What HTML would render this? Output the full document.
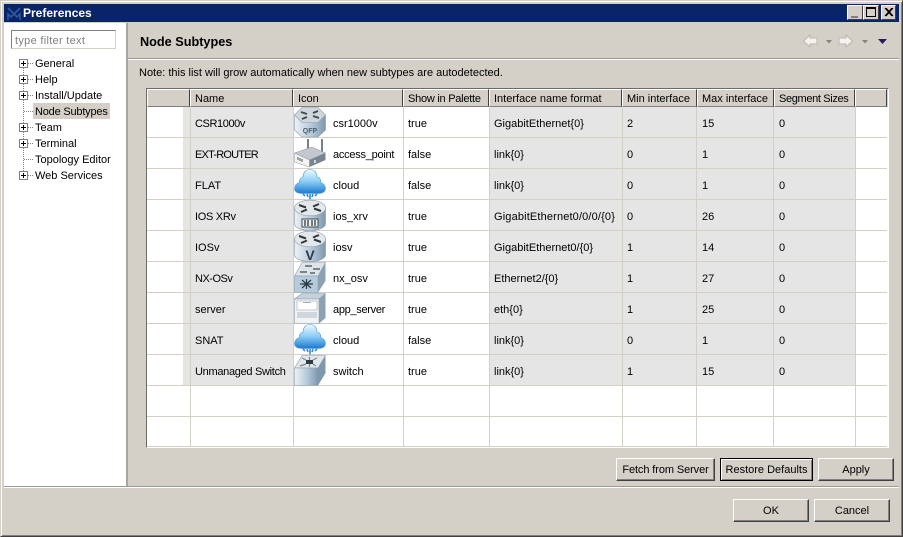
<!DOCTYPE html>
<html><head><meta charset="utf-8"><style>
html,body{margin:0;padding:0;background:#d4d0c8}
body{width:903px;height:537px;position:relative;overflow:hidden;font:11px "Liberation Sans",sans-serif;color:#000}
div,span,svg{position:absolute;box-sizing:border-box}
.t{white-space:nowrap;line-height:14px}
.btn{background:#d4d0c8;border:1px solid;border-color:#fff #404040 #404040 #fff;box-shadow:inset -1px -1px 0 #808080;text-align:center;line-height:21px;white-space:nowrap}
.pl{width:9px;height:9px;left:19px;border:1px solid #808080;background:#fff}
.pl:before{content:"";position:absolute;left:1px;top:3px;width:5px;height:1px;background:#000}
.pl:after{content:"";position:absolute;left:3px;top:1px;width:1px;height:5px;background:#000}
.dh{left:28px;width:5px;height:1px;background:repeating-linear-gradient(90deg,#808080 0 1px,transparent 1px 2px)}
.tr{left:35px;margin-top:1px}
.h{top:89px;height:18px;background:#d4d0c8;border:1px solid;border-color:#fff #404040 #808080 #fff;line-height:18px;padding-left:4px;white-space:nowrap}
.lv{top:107px;width:1px;height:339px;background:#d4d0c8}
.lh{left:147px;width:740px;height:1px;background:#d4d0c8}
.c{white-space:nowrap;line-height:14px;margin-top:1px}
.wb{top:5px;height:15px;width:16px;background:#d4d0c8;border:1px solid;border-color:#fff #404040 #404040 #fff}
</style></head><body>
<svg width="0" height="0" style="left:0;top:0"><defs>
<linearGradient id="s" x1="0" x2="1" y1="0" y2="0"><stop offset="0" stop-color="#eef2f6"/><stop offset=".55" stop-color="#b4c8da"/><stop offset="1" stop-color="#7f98ad"/></linearGradient>
<linearGradient id="cl" x1="0" x2="0" y1="0" y2="1"><stop offset="0" stop-color="#f2faff"/><stop offset=".5" stop-color="#8accf5"/><stop offset="1" stop-color="#1c78d0"/></linearGradient>
<symbol id="cloud" viewBox="0 0 32 31"><path d="M16 .5c4.500 0 7 3.500 7 7.500 3 .5 4 3 3.800 5.500 2.700 1 4.700 3.500 4.700 6 0 3.500-3.500 5-7.500 5H8c-4 0-7.500-1.500-7.500-5 0-2.500 2-5 4.700-6C5 11 6.500 8.500 9 8c0-4 2.500-7.500 7-7.500z" fill="url(#cl)" stroke="#4a9ade" stroke-width=".6"/><path d="M9 25l2 2M13 25l1 3M16 25v5.500M19 25l-1 3M23 25l-2 2" stroke="#2f8ee0" stroke-width="1.600"/></symbol>
<symbol id="router" viewBox="0 0 32 31"><path d="M.5 8v16c0 3.500 7 6.500 15.500 6.500S31.500 27.500 31.500 24V8z" fill="url(#s)" stroke="#8a9aa8" stroke-width=".6"/><ellipse cx="16" cy="8" rx="15.500" ry="7.800" fill="#e4e8eb" stroke="#8a9aa8" stroke-width=".6"/><path d="M5 5l7 2.500M27 11l-7-2.500M19 6.500l6-2.500M13 9.500l-6 2.500" stroke="#2d383e" stroke-width="2"/></symbol>
</defs></svg>

<!-- window frame -->
<div style="left:0;top:0;width:903px;height:537px;border:1px solid;border-color:#d4d0c8 #404040 #404040 #d4d0c8;box-shadow:inset 1px 1px 0 #fff,inset -1px -1px 0 #808080"></div>
<div style="left:4px;top:4px;width:895px;height:18px;background:#0a246a"></div>
<svg style="left:7px;top:7px" width="14" height="14" viewBox="0 0 14 14"><path d="M1 1l6 6 6-6M1 13V7l3 3 3-3 3 3 3-3v6" fill="none" stroke="#2f5aa0" stroke-width="1.600"/></svg>
<div class="t" style="left:23px;top:6px;color:#fff;font-weight:bold;font-size:12px">Preferences</div>
<div class="wb" style="left:847px"><div style="left:3px;top:10px;width:7px;height:2px;background:#808080"></div></div>
<div class="wb" style="left:863px"><div style="left:2px;top:1px;width:10px;height:10px;border:1px solid #000;border-top-width:2px"></div></div>
<div class="wb" style="left:881px;width:15px"><svg style="left:2px;top:2px" width="10" height="9" viewBox="0 0 10 9"><path d="M1 0l7 8M2 0l7 8M8 0L1 8M9 0L2 8" stroke="#000" stroke-width="1"/></svg></div>

<!-- left panel -->
<div style="left:4px;top:23px;width:122px;height:463px;background:#fff"></div>
<div style="left:126px;top:23px;width:2px;height:463px;background:#a8a59e"></div>
<div style="left:11px;top:30px;width:105px;height:19px;background:#fff;border:1px solid;border-color:#808080 #d4d0c8 #d4d0c8 #808080"></div>
<div class="t" style="left:15px;top:33px;margin-top:1px;color:#808080;letter-spacing:.3px">type filter text</div>
<div style="left:23px;top:68px;width:1px;height:107px;background:repeating-linear-gradient(0deg,#808080 0 1px,transparent 1px 2px)"></div>
<div class="pl" style="top:59px"></div><div class="dh" style="top:63px"></div><div class="t tr" style="top:56px">General</div>
<div class="pl" style="top:75px"></div><div class="dh" style="top:79px"></div><div class="t tr" style="top:72px">Help</div>
<div class="pl" style="top:91px"></div><div class="dh" style="top:95px"></div><div class="t tr" style="top:88px">Install/Update</div>
<div class="dh" style="top:111px;left:24px;width:9px"></div>
<div style="left:33px;top:103px;width:77px;height:16px;background:#d4d0c8"></div><div class="t tr" style="top:104px;letter-spacing:-.2px">Node Subtypes</div>
<div class="pl" style="top:123px"></div><div class="dh" style="top:127px"></div><div class="t tr" style="top:120px">Team</div>
<div class="pl" style="top:139px"></div><div class="dh" style="top:143px"></div><div class="t tr" style="top:136px">Terminal</div>
<div class="dh" style="top:159px;left:24px;width:9px"></div><div class="t tr" style="top:152px">Topology Editor</div>
<div class="pl" style="top:171px"></div><div class="dh" style="top:175px"></div><div class="t tr" style="top:168px">Web Services</div>

<!-- header -->
<div class="t" style="left:140px;top:35px;font-weight:bold;font-size:12.7px">Node Subtypes</div>
<div style="left:128px;top:58px;width:771px;height:1px;background:#9c9a94"></div>
<div style="left:128px;top:59px;width:771px;height:1px;background:#fff"></div>
<svg style="left:800px;top:32px" width="92" height="18" viewBox="0 0 92 18">
<path d="M3.500 9L10 3v3h7v6h-7v3z" fill="#f4f3f0" stroke="#b9b7b0"/>
<path d="M26 8h6l-3 3.500z" fill="#85837e"/>
<path d="M52.500 9L46 3v3h-7v6h7v3z" fill="#f4f3f0" stroke="#b9b7b0"/>
<path d="M62 8h6l-3 3.500z" fill="#85837e"/>
<path d="M78 7h9l-4.500 5z" fill="#2a1a5e"/>
</svg>
<div class="t" style="left:139px;top:66px">Note: this list will grow automatically when new subtypes are autodetected.</div>

<!-- table -->
<div style="left:146px;top:88px;width:743px;height:360px;background:#fff;border:1px solid;border-color:#6c6a66 #fff #fff #6c6a66"></div>
<div style="left:147px;top:89px;width:741px;height:18px;background:#d4d0c8"></div>
<div class="h" style="left:147px;width:43px"></div>
<div class="h" style="left:190px;width:103px">Name</div>
<div class="h" style="left:293px;width:110px">Icon</div>
<div class="h" style="left:403px;width:86px;letter-spacing:-.25px">Show in Palette</div>
<div class="h" style="left:489px;width:133px">Interface name format</div>
<div class="h" style="left:622px;width:75px">Min interface</div>
<div class="h" style="left:697px;width:77px">Max interface</div>
<div class="h" style="left:774px;width:81px;letter-spacing:-.35px">Segment Sizes</div>
<div class="h" style="left:855px;width:32px"></div>

<!-- grey cell bands -->
<div style="left:183px;top:107px;width:110px;height:278px;background:#e5e5e5"></div>
<div style="left:490px;top:107px;width:365px;height:278px;background:#e5e5e5"></div>
<!-- grid -->
<div class="lv" style="left:190px"></div><div class="lv" style="left:293px"></div><div class="lv" style="left:403px"></div><div class="lv" style="left:489px"></div><div class="lv" style="left:622px"></div><div class="lv" style="left:696px"></div><div class="lv" style="left:773px"></div><div class="lv" style="left:855px"></div>
<div class="lh" style="top:137px"></div><div class="lh" style="top:168px"></div><div class="lh" style="top:199px"></div><div class="lh" style="top:230px"></div><div class="lh" style="top:261px"></div><div class="lh" style="top:292px"></div><div class="lh" style="top:323px"></div><div class="lh" style="top:354px"></div><div class="lh" style="top:385px"></div><div class="lh" style="top:416px"></div><div class="lh" style="top:446px"></div>

<!-- icons -->
<svg style="left:294px;top:107px" width="32" height="31" viewBox="0 0 32 31"><path d="M.5 8v15l7.500 7h16l7.500-7V8z" fill="url(#s)" stroke="#8a9aa8" stroke-width=".6"/><path d="M.5 8L8 .5h16L31.500 8 24 15.500H8z" fill="#cfd6dc" stroke="#8a9aa8" stroke-width=".6"/><path d="M7 5l6 2M25 11l-6-2M19 6l5-2M13 10l-5 2" stroke="#3d4a50" stroke-width="1.800"/><text x="16" y="26" text-anchor="middle" font-family="Liberation Sans" font-size="7" font-weight="bold" fill="#4c6070">QFP</text></svg>
<svg style="left:294px;top:138px" width="32" height="31" viewBox="0 0 32 31"><path d="M14 1v11M28 1v15" stroke="#78818a" stroke-width="2"/><path d="M.5 15L18 9l13.500 6-16 7z" fill="#c2c8ce" stroke="#8a929a" stroke-width=".5"/><path d="M.5 15l15 7v7L.5 24z" fill="#f2f3f4" stroke="#8a929a" stroke-width=".5"/><path d="M15.500 22l16-7v7l-16 7z" fill="#78848f"/><path d="M4 19v3M6 20v3M8 21v3" stroke="#555" stroke-width="1"/><path d="M21 22v3" stroke="#eee" stroke-width="1.500"/></svg>
<svg style="left:294px;top:169px" width="32" height="31"><use href="#cloud" width="32" height="31"/></svg>
<svg style="left:294px;top:200px" width="32" height="31" viewBox="0 0 32 31"><use href="#router" width="32" height="31"/><rect x="8" y="19" width="16" height="8" fill="#eef1f3" stroke="#3d4a50"/><path d="M11 20v6M14 20v6M18 20v6M21 20v6" stroke="#3d4a50" stroke-width="1.400"/></svg>
<svg style="left:294px;top:231px" width="32" height="31" viewBox="0 0 32 31"><use href="#router" width="32" height="31"/><text x="16" y="29" text-anchor="middle" font-family="Liberation Sans" font-size="14" font-weight="bold" fill="#2c3a44">V</text></svg>
<svg style="left:294px;top:262px" width="32" height="31" viewBox="0 0 32 31"><path d="M.5 14L8 .5h23.500L24 14z" fill="#dfe4e8" stroke="#8a9aa8" stroke-width=".6"/><path d="M.5 14H24v16.500H.5z" fill="#b5cadb" stroke="#8a9aa8" stroke-width=".6"/><path d="M24 14l7.500-13.500V19L24 30.500z" fill="#8ba2b5"/><path d="M11 4h7M19 7h7M6 10h7M16 11h5" stroke="#58646c" stroke-width="1.500"/><path d="M6 22h13M12.500 17v10M8 18l9 8M17 18l-9 8" stroke="#2c3a44" stroke-width="1.200"/></svg>
<svg style="left:294px;top:293px" width="32" height="31" viewBox="0 0 32 31"><path d="M.5 6L8 .5h23.500L25 6z" fill="#c4d2de" stroke="#8a9aa8" stroke-width=".6"/><path d="M.5 6H25v24.500H.5z" fill="#f1f3f5" stroke="#8a9aa8" stroke-width=".6"/><path d="M25 6l6.500-5.500V25L25 30.500z" fill="#8ba2b5"/><rect x="3" y="8" width="20" height="9" fill="#fff" stroke="#c0c8d0"/><path d="M9 9.500h8" stroke="#aab"/><rect x="3" y="19" width="20" height="6" fill="#cfd6dc"/></svg>
<svg style="left:294px;top:324px" width="32" height="31"><use href="#cloud" width="32" height="31"/></svg>
<svg style="left:294px;top:355px" width="32" height="31" viewBox="0 0 32 31"><path d="M.5 13L8 .5h23.500L24 13z" fill="#e3e7ea" stroke="#8a9aa8" stroke-width=".6"/><path d="M.5 13H24v17.500H.5z" fill="url(#s)" stroke="#8a9aa8" stroke-width=".6"/><path d="M24 13L31.500.5V18L24 30.500z" fill="#7f98ad"/><rect x="12" y="5" width="7" height="4" fill="#2c3a44"/><path d="M8 3l4 2M23 3l-4 2M6 11l6-2M22 11l-3-2M15.500 2v3M15.500 9v3" stroke="#7a8790" stroke-width="1.200"/></svg>

<!-- rows -->
<div class="c" style="left:195px;top:116px;letter-spacing:-.4px">CSR1000v</div><div class="c" style="left:333px;top:116px">csr1000v</div><div class="c" style="left:408px;top:116px">true</div><div class="c" style="left:494px;top:116px">GigabitEthernet{0}</div><div class="c" style="left:627px;top:116px">2</div><div class="c" style="left:702px;top:116px">15</div><div class="c" style="left:779px;top:116px">0</div>
<div class="c" style="left:195px;top:147px;letter-spacing:-.8px">EXT-ROUTER</div><div class="c" style="left:333px;top:147px;letter-spacing:-.25px">access_point</div><div class="c" style="left:408px;top:147px">false</div><div class="c" style="left:494px;top:147px">link{0}</div><div class="c" style="left:627px;top:147px">0</div><div class="c" style="left:702px;top:147px">1</div><div class="c" style="left:779px;top:147px">0</div>
<div class="c" style="left:195px;top:178px">FLAT</div><div class="c" style="left:333px;top:178px">cloud</div><div class="c" style="left:408px;top:178px">false</div><div class="c" style="left:494px;top:178px">link{0}</div><div class="c" style="left:627px;top:178px">0</div><div class="c" style="left:702px;top:178px">1</div><div class="c" style="left:779px;top:178px">0</div>
<div class="c" style="left:195px;top:209px;letter-spacing:-.3px">IOS XRv</div><div class="c" style="left:333px;top:209px">ios_xrv</div><div class="c" style="left:408px;top:209px">true</div><div class="c" style="left:494px;top:209px;letter-spacing:.15px">GigabitEthernet0/0/0/{0}</div><div class="c" style="left:627px;top:209px">0</div><div class="c" style="left:702px;top:209px">26</div><div class="c" style="left:779px;top:209px">0</div>
<div class="c" style="left:195px;top:240px">IOSv</div><div class="c" style="left:333px;top:240px">iosv</div><div class="c" style="left:408px;top:240px">true</div><div class="c" style="left:494px;top:240px">GigabitEthernet0/{0}</div><div class="c" style="left:627px;top:240px">1</div><div class="c" style="left:702px;top:240px">14</div><div class="c" style="left:779px;top:240px">0</div>
<div class="c" style="left:195px;top:271px;letter-spacing:-.5px">NX-OSv</div><div class="c" style="left:333px;top:271px">nx_osv</div><div class="c" style="left:408px;top:271px">true</div><div class="c" style="left:494px;top:271px">Ethernet2/{0}</div><div class="c" style="left:627px;top:271px">1</div><div class="c" style="left:702px;top:271px">27</div><div class="c" style="left:779px;top:271px">0</div>
<div class="c" style="left:195px;top:302px">server</div><div class="c" style="left:333px;top:302px;letter-spacing:-.3px">app_server</div><div class="c" style="left:408px;top:302px">true</div><div class="c" style="left:494px;top:302px">eth{0}</div><div class="c" style="left:627px;top:302px">1</div><div class="c" style="left:702px;top:302px">25</div><div class="c" style="left:779px;top:302px">0</div>
<div class="c" style="left:195px;top:333px">SNAT</div><div class="c" style="left:333px;top:333px">cloud</div><div class="c" style="left:408px;top:333px">false</div><div class="c" style="left:494px;top:333px">link{0}</div><div class="c" style="left:627px;top:333px">0</div><div class="c" style="left:702px;top:333px">1</div><div class="c" style="left:779px;top:333px">0</div>
<div class="c" style="left:195px;top:364px;letter-spacing:-.3px">Unmanaged Switch</div><div class="c" style="left:333px;top:364px">switch</div><div class="c" style="left:408px;top:364px">true</div><div class="c" style="left:494px;top:364px">link{0}</div><div class="c" style="left:627px;top:364px">1</div><div class="c" style="left:702px;top:364px">15</div><div class="c" style="left:779px;top:364px">0</div>

<!-- buttons -->
<div class="btn" style="left:616px;top:458px;width:99px;height:23px;line-height:22px;letter-spacing:-.1px">Fetch from Server</div>
<div class="btn" style="left:720px;top:458px;width:93px;height:23px;line-height:22px;border-color:#000;box-shadow:inset 1px 1px 0 #fff,inset -1px -1px 0 #808080">Restore Defaults</div>
<div class="btn" style="left:818px;top:458px;width:76px;height:23px;line-height:22px">Apply</div>
<div style="left:4px;top:486px;width:895px;height:1px;background:#9c9a94"></div>
<div style="left:4px;top:487px;width:895px;height:1px;background:#fff"></div>
<div class="btn" style="left:733px;top:499px;width:76px;height:23px;line-height:22px">OK</div>
<div class="btn" style="left:814px;top:499px;width:76px;height:23px;line-height:22px">Cancel</div>
</body></html>
